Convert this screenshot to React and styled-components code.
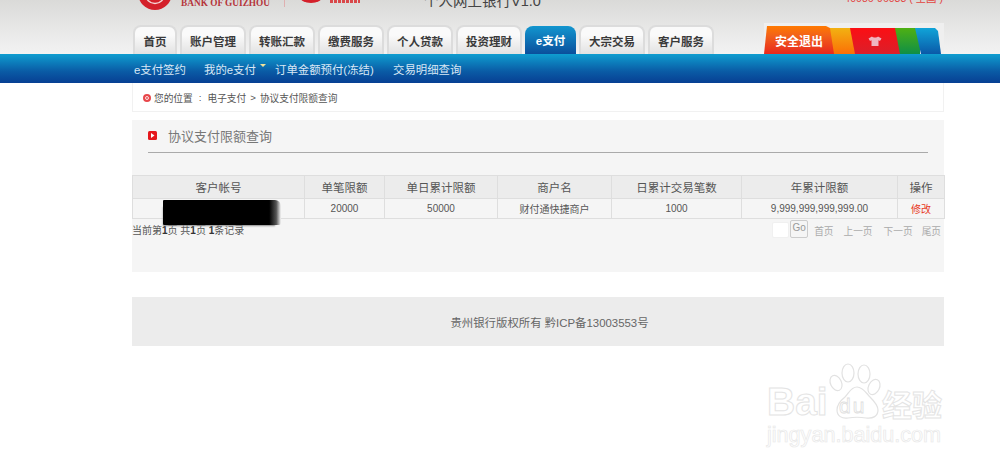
import React from "react";
import styled, { createGlobalStyle } from "styled-components";

const Global = createGlobalStyle`
  html, body { margin: 0; padding: 0; background: #fff; }
  body { font-family: "Liberation Sans", "Noto Sans CJK SC", sans-serif; font-size: 11px; color: #555; overflow: hidden; }
  * { box-sizing: border-box; }
`;

const Page = styled.div`
  position: relative;
  width: 1000px;
  height: 469px;
  overflow: hidden;
`;

const Header = styled.header`
  height: 54px;
  background: linear-gradient(#dadad8, #eeeeee 80%, #f2f2f2);
  padding: 0 56px 0 132px;
  display: flex;
  flex-direction: column;
  justify-content: space-between;
  overflow: hidden;
`;

const TopRow = styled.div`
  height: 10px;
  display: flex;
  align-items: flex-start;
`;

const LogoMark = styled.svg`
  flex: none;
  width: 36px;
  height: 10px;
  margin-left: 6px;
`;

const BankName = styled.span`
  flex: none;
  width: 103px;
  font: bold 9.3px/10px "Liberation Serif", serif;
  color: #b5353a;
  margin: -2px 0 0 7px;
  white-space: nowrap;
`;

const SecondLogo = styled.svg`
  flex: none;
  width: 80px;
  height: 10px;
`;

const SiteTitle = styled.span`
  font-size: 14.5px;
  line-height: 14px;
  color: #444;
  margin: -6px 0 0 60px;
  white-space: nowrap;
`;

const Hotline = styled.span`
  margin: -7px 1px 0 auto;
  font-size: 10.5px;
  line-height: 10px;
  color: #e2443f;
  white-space: nowrap;
`;

const TabRow = styled.nav`
  display: flex;
  align-items: flex-end;
  height: 31px;
  padding-left: 1px;
`;

const Tab = styled.a`
  flex: none;
  width: ${(p) => (p.$active ? 51 : p.$first ? 44 : 66)}px;
  height: ${(p) => (p.$active ? 28 : 29)}px;
  margin-right: 3px;
  border-radius: 8px 8px 0 0;
  border: ${(p) => (p.$active ? "none" : "2px solid #dcdcdc")};
  border-bottom: none;
  background: ${(p) =>
    p.$active ? "linear-gradient(#1296cf, #0a4f9c)" : "linear-gradient(#fafafa 30%, #e2e2e2)"};
  color: ${(p) => (p.$active ? "#fff" : "#3a3a3a")};
  font-size: 11.5px;
  font-weight: bold;
  display: flex;
  align-items: center;
  justify-content: center;
`;

const Theme = styled.div`
  flex: none;
  margin-left: auto;
  width: 180px;
  height: 31px;
  background: #efefef;
  display: flex;
  align-items: flex-end;
`;

const Logout = styled.a`
  position: relative;
  z-index: 1;
  flex: none;
  width: 70px;
  height: 28px;
  clip-path: polygon(3px 0, 62px 0, 66px 2px, 70px 100%, 0 100%);
  background: linear-gradient(#ff7a00, #f2611a 35%, #e8281d);
  color: #fff;
  font-size: 12px;
  font-weight: bold;
  display: flex;
  align-items: center;
  justify-content: center;
`;

const Swatch = styled.div`
  flex: none;
  width: ${(p) => p.$w}px;
  height: 26px;
  margin-left: -${(p) => p.$o}px;
  clip-path: ${(p) =>
    p.$last
      ? "polygon(0 0, calc(100% - 6px) 0, calc(100% - 3px) 3px, 100% 100%, 6px 100%)"
      : "polygon(0 0, 100% 0, 100% 100%, 5px 100%)"};
  background: linear-gradient(${(p) => p.$a}, ${(p) => p.$b});
  display: flex;
  align-items: center;
  justify-content: center;
`;

const SubNav = styled.nav`
  height: 29px;
  background: linear-gradient(#0f9dd0, #0a5ba5 60%, #073f93);
  padding-left: 134px;
  display: flex;
  align-items: center;
  color: #d9e8f5;
  font-size: 11.4px;
`;

const SubItem = styled.a`
  flex: none;
  width: ${(p) => p.$w}px;
  white-space: nowrap;
  position: relative;
`;

const Caret = styled.span`
  position: absolute;
  left: 56px;
  top: 3px;
  width: 0;
  height: 0;
  border-left: 3px solid transparent;
  border-right: 3px solid transparent;
  border-top: 3px solid #f3e39a;
`;

const Content = styled.main`
  width: 812px;
  margin-left: 132px;
`;

const Crumb = styled.div`
  height: 29px;
  border: 1px solid #f1f1f1;
  border-top: none;
  padding: 1px 0 0 10px;
  display: flex;
  align-items: center;
  font-size: 9.7px;
  color: #555;
`;

const CrumbDot = styled.span`
  width: 8px;
  height: 8px;
  border-radius: 50%;
  background: #e8474b;
  border: 2px solid #e8474b;
  box-shadow: inset 0 0 0 1px #fff;
  margin-right: 3px;
`;

const CrumbSep = styled.span`
  margin: 0 ${(p) => p.$g}px;
`;

const Panel = styled.section`
  margin-top: 8px;
  height: 152px;
  background: #f5f5f5;
  display: flex;
  flex-direction: column;
`;

const TitleBar = styled.div`
  margin: 0 16px;
  height: 33px;
  border-bottom: 1px solid #aaa;
  display: flex;
  align-items: center;
  color: #777;
  font-size: 13px;
  padding-bottom: 1px;
`;

const TitleIcon = styled.svg`
  width: 9px;
  height: 9px;
  margin-right: 11px;
`;

const Table = styled.table`
  width: 812px;
  margin-top: 22px;
  border-collapse: collapse;
  table-layout: fixed;
  font-size: 10px;
  color: #555;
`;

const Th = styled.th`
  height: 23px;
  font-weight: normal;
  background: #ececec;
  border: 1px solid #dedede;
  padding: 0;
  font-size: 11.5px;
`;

const Td = styled.td`
  height: 20px;
  border: 1px solid #dedede;
  text-align: center;
  padding: 0;
  position: relative;
  color: ${(p) => p.$c || "#555"};
`;

const Redaction = styled.div`
  position: absolute;
  left: 30px;
  top: 1px;
  width: 118px;
  height: 25px;
  background: linear-gradient(90deg, #000 90%, #555 96%, #f5f5f5);
  border-radius: 1px 6px 2px 1px;
  box-shadow: -3px 4px 2px -3px #888;
`;

const Pager = styled.div`
  display: flex;
  justify-content: space-between;
  align-items: flex-start;
  padding-right: 3px;
  font-size: 9.7px;
`;

const PagerInfo = styled.span`
  margin-top: 3px;
  font-size: 10px;
  color: #555;
  b { color: #333; }
`;

const PagerLinks = styled.div`
  display: flex;
  align-items: center;
  margin-top: 1px;
  color: #aaa;
`;

const PageInput = styled.div`
  width: 17px;
  height: 16px;
  background: #fff;
  border: 1px solid #f0f0f0;
  border-radius: 2px;
  margin: 2px 1px 0 0;
`;

const GoButton = styled.div`
  width: 18px;
  height: 18px;
  border: 1px solid #ccc;
  border-radius: 2px;
  color: #999;
  font-size: 10px;
  margin-right: 6px;
  padding-top: 1px;
  display: flex;
  justify-content: center;
`;

const PageLink = styled.a`
  margin-left: ${(p) => p.$g || 0}px;
  padding-top: 3px;
`;

const Footer = styled.footer`
  width: 812px;
  height: 49px;
  margin: 25px 0 0 132px;
  padding-left: 23px;
  background: #ececec;
  color: #666;
  font-size: 11.4px;
  display: flex;
  align-items: center;
  justify-content: center;
`;

const Watermark = styled.div`
  position: absolute;
  left: 766px;
  top: 361px;
  width: 190px;
  height: 90px;
  color: #fff;
`;

const WmBrand = styled.span`
  position: absolute;
  font: bold 39px/39px "Liberation Sans", sans-serif;
  left: 1px;
  top: 21px;
  -webkit-text-stroke: 1px #e4e4e4;
  color: #fff;
`;

const WmDu = styled.span`
  position: absolute;
  left: 73px;
  top: 34px;
  font: 21px/21px "Liberation Sans", sans-serif;
  letter-spacing: 2px;
  color: #fff;
  -webkit-text-stroke: 0.8px #dedede;
`;

const WmCn = styled.span`
  position: absolute;
  left: 116px;
  top: 27px;
  font: bold 30px/30px "Noto Sans CJK SC", sans-serif;
  color: #fff;
  -webkit-text-stroke: 1px #e4e4e4;
  white-space: nowrap;
`;

const WmUrl = styled.span`
  position: absolute;
  left: 1px;
  top: 62px;
  font: 21.6px/24px "Liberation Sans", sans-serif;
  color: #fff;
  -webkit-text-stroke: 0.7px #e8e8e8;
  white-space: nowrap;
`;

const WmPaw = styled.svg`
  position: absolute;
  left: 60px;
  top: 0;
  width: 60px;
  height: 60px;
`;

const tabs = ["账户管理", "转账汇款", "缴费服务", "个人贷款", "投资理财", "e支付", "大宗交易", "客户服务"];
const heads = [
  ["客户帐号", 172], ["单笔限额", 80], ["单日累计限额", 113], ["商户名", 114],
  ["日累计交易笔数", 130], ["年累计限额", 156], ["操作", 47],
];

export default function App() {
  return (
    <Page>
      <Global />
      <Header>
        <TopRow>
          <LogoMark viewBox="0 0 36 10">
            <circle cx="17" cy="-7" r="17" fill="#d4202a" />
            <circle cx="17" cy="-6" r="9.500" fill="none" stroke="#f6d5d5" strokeWidth="1.400" />
          </LogoMark>
          <BankName>BANK OF GUIZHOU</BankName>
          <SecondLogo viewBox="0 0 80 10">
            <line x1="0.5" y1="0" x2="0.5" y2="7" stroke="#dfb0b0" />
            <ellipse cx="27" cy="-3" rx="11" ry="6" fill="#d4202a" />
            <line x1="46" y1="1.500" x2="76" y2="1.500" stroke="#d9484a" strokeWidth="3" strokeDasharray="3 1" />
          </SecondLogo>
          <SiteTitle>个人网上银行V1.0</SiteTitle>
          <Hotline>40086-96033 ( 全国 )</Hotline>
        </TopRow>
        <TabRow>
          <Tab $first>首页</Tab>
          {tabs.map((t) => (
            <Tab key={t} $active={t === "e支付"}>{t}</Tab>
          ))}
          <Theme>
            <Logout>安全退出</Logout>
            <Swatch $w={28} $o={6} $a="#f2b212" $b="#fb6f06" />
            <Swatch $w={50} $o={6} $a="#fb0f14" $b="#db1f2a">
              <svg width="14" height="10" viewBox="0 0 14 10">
                <path d="M4 0.5L0.5 2.500l1.500 2.500 1.500-.7V10h7V4.300l1.500.7 1.500-2.500L10 .5C9 1.800 5 1.800 4 .5z" fill="#efb5c0" />
              </svg>
            </Swatch>
            <Swatch $w={25} $o={5} $a="#4fb013" $b="#0f8f46" />
            <Swatch $w={26} $o={5} $last $a="#10a4d8" $b="#0a59a8" />
          </Theme>
        </TabRow>
      </Header>
      <SubNav>
        <SubItem $w={70}>e支付签约</SubItem>
        <SubItem $w={71}>我的e支付<Caret /></SubItem>
        <SubItem $w={118}>订单金额预付(冻结)</SubItem>
        <SubItem $w={100}>交易明细查询</SubItem>
      </SubNav>
      <Content>
        <Crumb>
          <CrumbDot />
          您的位置<CrumbSep $g={6}>:</CrumbSep>电子支付<CrumbSep $g={4}>&gt;</CrumbSep>协议支付限额查询
        </Crumb>
        <Panel>
          <TitleBar>
            <TitleIcon viewBox="0 0 9 9">
              <rect width="9" height="9" rx="1.500" fill="#e5171c" />
              <path d="M3 2l3.500 2.500L3 7z" fill="#fff" />
            </TitleIcon>
            协议支付限额查询
          </TitleBar>
          <Table>
            <colgroup>
              {heads.map(([h, w]) => <col key={h} width={w} />)}
            </colgroup>
            <thead>
              <tr>{heads.map(([h]) => <Th key={h}>{h}</Th>)}</tr>
            </thead>
            <tbody>
              <tr>
                <Td><Redaction /></Td>
                <Td>20000</Td>
                <Td>50000</Td>
                <Td>财付通快捷商户</Td>
                <Td>1000</Td>
                <Td>9,999,999,999,999.00</Td>
                <Td $c="#e8391f">修改</Td>
              </tr>
            </tbody>
          </Table>
          <Pager>
            <PagerInfo>当前第<b>1</b>页 共<b>1</b>页 <b>1</b>条记录</PagerInfo>
            <PagerLinks>
              <PageInput />
              <GoButton>Go</GoButton>
              <PageLink>首页</PageLink>
              <PageLink $g={10}>上一页</PageLink>
              <PageLink $g={11}>下一页</PageLink>
              <PageLink $g={9}>尾页</PageLink>
            </PagerLinks>
          </Pager>
        </Panel>
      </Content>
      <Footer>贵州银行版权所有 黔ICP备13003553号</Footer>
      <Watermark>
        <WmPaw viewBox="0 0 60 60" fill="#fff" stroke="#e2e2e2" strokeWidth="1.200">
          <ellipse cx="10" cy="22" rx="5.500" ry="8" transform="rotate(-25 10 22)" />
          <ellipse cx="22" cy="12" rx="6" ry="9" />
          <ellipse cx="38" cy="13" rx="6" ry="9" />
          <ellipse cx="48" cy="26" rx="5.500" ry="8" transform="rotate(25 48 26)" />
          <path d="M31 26c-6 0-8 6-12 10C14 40 11 44 11 49c0 6 5 9 11 8 6-1 12-1 18 0 7 1 12-2 12-8 0-5-4-9-8-13-4-4-7-10-13-10z" />
        </WmPaw>
        <WmBrand>Bai</WmBrand>
        <WmDu>du</WmDu>
        <WmCn>经验</WmCn>
        <WmUrl>jingyan.baidu.com</WmUrl>
      </Watermark>
    </Page>
  );
}
